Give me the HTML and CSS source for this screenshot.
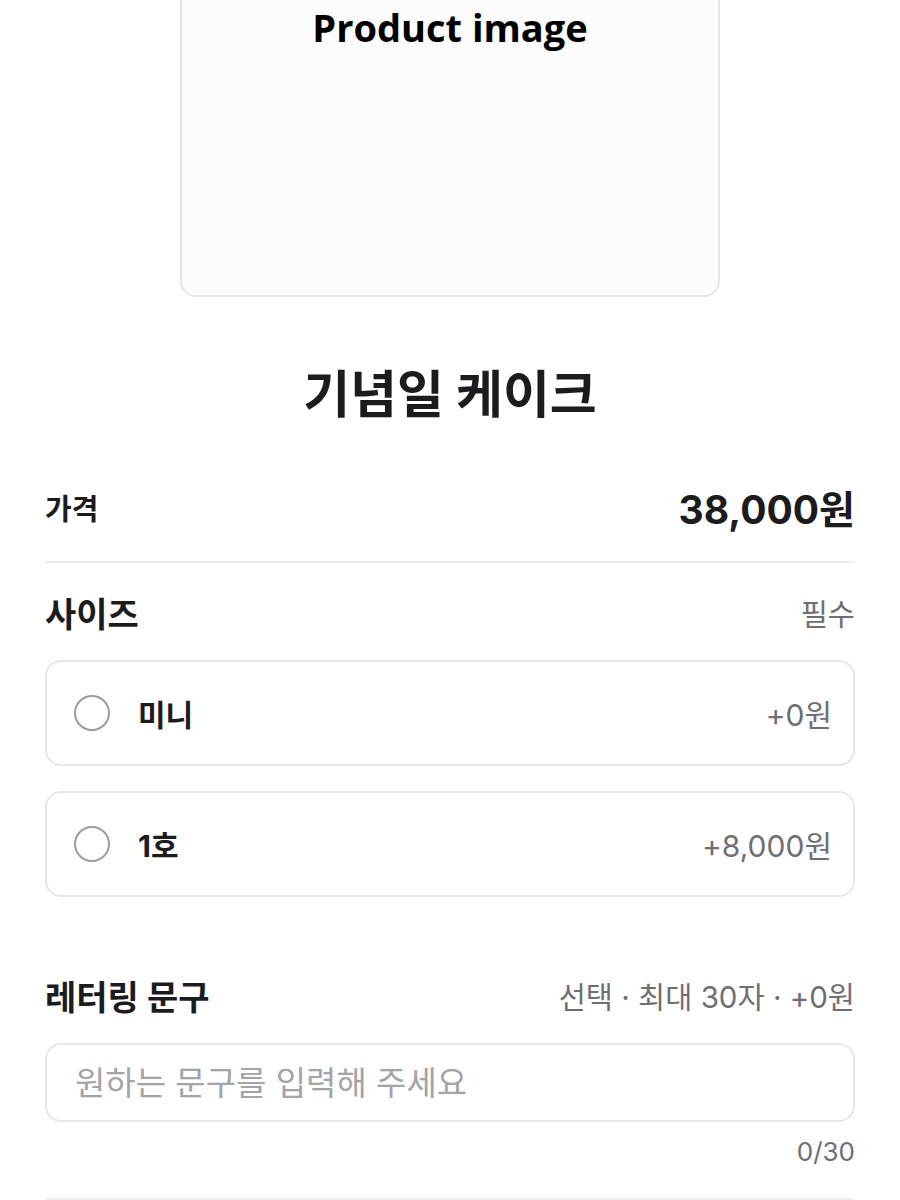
FILE: index.html
```html
<!DOCTYPE html>
<html lang="ko">
<head>
  <meta charset="UTF-8" />
  <meta name="viewport" content="width=device-width,initial-scale=1.0" />
  <title>기념일 케이크</title>
  <link rel="stylesheet" href="styles.css">
</head>
<body>
  <main class="page">
    <!-- 상품 이미지 -->
    <div class="hero">
      <span class="hero-label">Product image</span>
    </div>

    <h1 class="title">기념일 케이크</h1>

    <div class="price-row">
      <span class="price-label">가격</span>
      <span class="price">38,000원</span>
    </div>

    <!-- 사이즈 -->
    <section class="group">
      <div class="group-head">
        <h2 class="group-title">사이즈</h2>
        <span class="group-note">필수</span>
      </div>
      <div class="options">
        <label class="option">
          <span class="radio"></span>
          <span class="opt-name">미니</span>
          <span class="opt-price">+0원</span>
        </label>
        <label class="option">
          <span class="radio"></span>
          <span class="opt-name">1호</span>
          <span class="opt-price">+8,000원</span>
        </label>
      </div>
    </section>

    <!-- 레터링 -->
    <section class="group lettering">
      <div class="group-head">
        <h2 class="group-title">레터링 문구</h2>
        <span class="group-note">선택 · 최대 30자 · +0원</span>
      </div>
      <input class="text-input" type="text" maxlength="30" placeholder="원하는 문구를 입력해 주세요">
      <p class="counter">0/30</p>
    </section>

    <hr class="bottom-line">
  </main>
</body>
</html>
```

FILE: styles.css
```css
:root{
  --text:#1c1c1e;
  --sub:#6e6e73;
  --placeholder:#a3a3a8;
  --line:#e6e6ea;
  --radius:16px;
}
*{box-sizing:border-box;}
body{
  margin:0;
  font-family:Inter,"Noto Sans CJK KR",sans-serif;
  color:var(--text);
  background:#fff;
}
.page{padding:0 45px;overflow:hidden;}

/* 이미지 */
.hero{
  width:540px;
  height:540px;
  margin:-243px auto 0;
  border:2px solid var(--line);
  border-radius:var(--radius);
  background:#fcfcfc;
  display:flex;
  align-items:center;
  justify-content:center;
}
.hero-label{
  font-family:"Open Sans",sans-serif;
  font-weight:700;
  font-size:38px;
  color:#000;
}

.title{
  margin:68px 0 0;
  text-align:center;
  font-size:51px;
  line-height:60px;
  font-weight:700;
}

/* 가격 */
.price-row{
  margin-top:55px;
  padding-bottom:21px;
  border-bottom:2px solid #eeeef0;
  display:flex;
  justify-content:space-between;
  align-items:center;
  line-height:60px;
}
.price-label{font-size:29px;font-weight:600;}
.price{font-size:39px;font-weight:700;}

/* 옵션 그룹 */
.group{margin-top:29px;}
.group-head{
  display:flex;
  justify-content:space-between;
  align-items:center;
  height:40px;
}
.group-title{margin:0;font-size:34px;font-weight:700;}
.group-note{font-size:29.5px;color:var(--sub);}

.options{margin-top:28px;display:flex;flex-direction:column;gap:25px;}
.option{
  height:106px;
  border:2px solid var(--line);
  border-radius:var(--radius);
  padding:0 21px 0 27px;
  display:flex;
  align-items:center;
  gap:28px;
  cursor:pointer;
}
.radio{
  width:36px;height:36px;
  border:2px solid #9c9ca1;
  border-radius:50%;
  flex:none;
}
.opt-name{font-size:30px;font-weight:700;}
.opt-price{margin-left:auto;font-size:30px;color:var(--sub);}

/* 레터링 */
.lettering{margin-top:78px;}
.text-input{
  display:block;
  width:100%;
  height:79px;
  margin-top:28px;
  padding:0 28px;
  border:2px solid var(--line);
  border-radius:var(--radius);
  font-family:inherit;
  font-size:33px;
  color:var(--text);
  outline:none;
}
.text-input::placeholder{color:var(--placeholder);}
.counter{
  margin:15px 0 0;
  text-align:right;
  font-size:26px;
  line-height:30px;
  color:var(--sub);
}
.bottom-line{
  margin:31px 0 0;
  border:0;
  border-top:2px solid #eeeef0;
}
```
